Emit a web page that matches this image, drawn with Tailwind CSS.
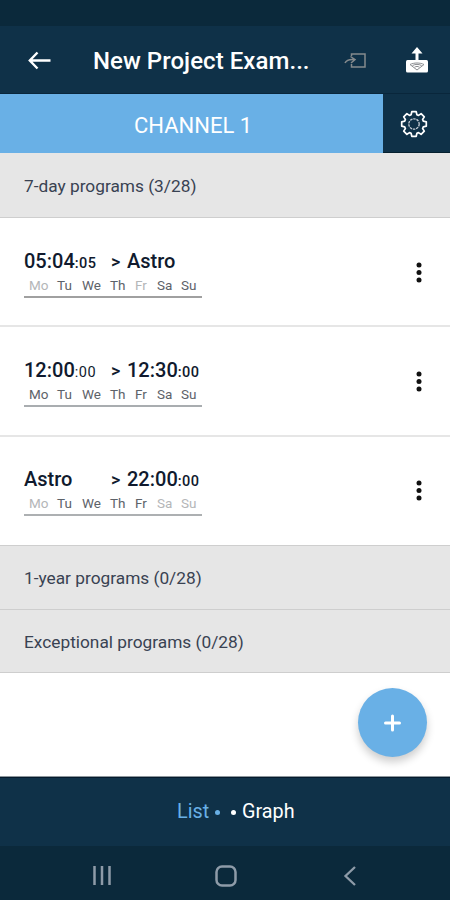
<!DOCTYPE html>
<html lang="en">

<head>
    <meta charset="UTF-8">
    <meta name="viewport" content="width=device-width, initial-scale=1.0">
    <title>Channel Programs</title>
    <script src="https://cdn.jsdelivr.net/npm/@tailwindcss/browser@4"></script>
</head>

<body class="bg-white">
    <div class="w-[450px] h-[900px] flex flex-col overflow-hidden whitespace-nowrap bg-white text-[#101a2e] font-['Roboto',sans-serif]">
        <!-- Status bar -->
        <div class="h-[26px] shrink-0 bg-[#0b293b]"></div>

        <!-- Header -->
        <header class="h-[68px] shrink-0 bg-[#0f3148] text-white flex items-center border-b border-[#09263b]">
            <svg class="ml-7 w-6 h-[22px] shrink-0" viewBox="0 0 24 22" fill="none" stroke="currentColor" stroke-width="2.4">
                <path d="M22.500 11.500H2M9.500 3.500L1.800 11.500l7.700 8" />
            </svg>
            <h1 class="ml-[41px] w-[222px] text-[24px] leading-8 font-medium tracking-[0.05px] pt-[3px]">New Project Exam...</h1>
            <svg class="ml-[29px] w-6 h-5 shrink-0" viewBox="0 0 24 20" fill="none" stroke="#858a8d" stroke-width="1.5">
                <path d="M7.500 6V4H21v13H7.500v-3M1 13c1.500-3 4-4 9-3.500M6.500 6.500l4.500 3-4 3.500" />
            </svg>
            <svg class="ml-[37px] w-6 h-[26px] shrink-0" viewBox="0 0 24 26">
                <path d="M12 0l5.500 6.500H13.500v7h-3V6.500H6.500z" fill="white" />
                <rect x="1" y="13" width="22" height="12.500" rx="1.500" fill="white" />
                <path d="M5 17.500c4-2 10-2 14 0l-7 5.500zM7.500 18.500c3-1.500 6-1.500 9 0M9.500 20.200c2-1 3-1 5 0" fill="none" stroke="#8b8d91" stroke-width="1" />
            </svg>
        </header>

        <!-- Channel tab -->
        <div class="h-[59px] shrink-0 flex bg-[#0f3148]">
            <div class="w-[383px] bg-[#69b0e6] text-white text-[22px] pl-[3px] pt-[3px] flex items-center justify-center">CHANNEL 1</div>
            <div class="flex-1 flex items-center justify-center border-b border-[#06202f]">
                <svg class="w-7 h-7 mr-[5px] mt-0.5" viewBox="-14 -14 28 28" fill="none" stroke="white" stroke-width="1.700" stroke-linejoin="round">
                    <path d="M-2.900-9.300L-2.200-12.300H2.200L2.900-9.300L4.500-8.600L7.100-10.300L10.300-7.100L8.600-4.500L9.300-2.900L12.300-2.200V2.200L9.300 2.900L8.600 4.500L10.300 7.100L7.100 10.300L4.500 8.600L2.900 9.300L2.200 12.300H-2.200L-2.900 9.300L-4.500 8.600L-7.100 10.300L-10.300 7.100L-8.600 4.500L-9.300 2.900L-12.300 2.200V-2.200L-9.300-2.900L-8.600-4.500L-10.300-7.100L-7.100-10.300L-4.500-8.600Z" />
                    <circle r="5.200" stroke-width="1.300" stroke="#c5ccd4" stroke-dasharray="2.500 .8" />
                </svg>
            </div>
        </div>

        <!-- Programs -->
        <main class="h-[624px] shrink-0 relative border-b border-[#8d979d]">
            <h2 class="h-[65px] bg-[#e6e6e6] border-b border-[#cecece] pl-6 pt-1 flex items-center text-[17.3px] text-[#394252]">7-day programs (3/28)</h2>

            <div class="h-[109px] border-b-2 border-[#e6e6e6] pl-6 pr-6 pt-[30px] flex justify-between">
                <div class="w-[178px]">
                    <div class="flex items-baseline h-[28px] text-[20px] leading-[26px] font-medium">
                        <span class="w-[87px]">05:04<span class="text-[14.5px] tracking-[0.5px]">:05</span></span>
                        <span class="w-4 text-[18px]">&gt;</span>
                        <span>Astro</span>
                    </div>
                    <div class="h-[22px] border-b-2 border-[#a0a0a0] pl-[5px] flex text-[13.500px] leading-[19px] text-[#5d6269]">
                        <span class="w-7 text-[#b4b6b8]">Mo</span><span class="w-[25px]">Tu</span><span class="w-7">We</span><span class="w-[25px]">Th</span><span class="w-[22px] text-[#b4b6b8]">Fr</span><span class="w-6">Sa</span><span>Su</span>
                    </div>
                </div>
                <svg class="w-3.5 h-6 mt-3" viewBox="0 0 14 24" fill="#111">
                    <circle cx="7" cy="5" r="2.500" /><circle cx="7" cy="12.500" r="2.500" /><circle cx="7" cy="20" r="2.500" />
                </svg>
            </div>

            <div class="h-[110px] border-b-2 border-[#e6e6e6] pl-6 pr-6 pt-[30px] flex justify-between">
                <div class="w-[178px]">
                    <div class="flex items-baseline h-[28px] text-[20px] leading-[26px] font-medium">
                        <span class="w-[87px]">12:00<span class="text-[14.5px] tracking-[0.5px] font-normal">:00</span></span>
                        <span class="w-4 text-[18px]">&gt;</span>
                        <span>12:30<span class="text-[14.5px] tracking-[0.5px]">:00</span></span>
                    </div>
                    <div class="h-[22px] border-b-2 border-[#a9adb0] pl-[5px] flex text-[13.500px] leading-[19px] text-[#5d6269]">
                        <span class="w-7">Mo</span><span class="w-[25px]">Tu</span><span class="w-7">We</span><span class="w-[25px]">Th</span><span class="w-[22px]">Fr</span><span class="w-6">Sa</span><span>Su</span>
                    </div>
                </div>
                <svg class="w-3.5 h-6 mt-3" viewBox="0 0 14 24" fill="#111">
                    <circle cx="7" cy="5" r="2.500" /><circle cx="7" cy="12.500" r="2.500" /><circle cx="7" cy="20" r="2.500" />
                </svg>
            </div>

            <div class="h-[108px] pl-6 pr-6 pt-[29px] flex justify-between">
                <div class="w-[178px]">
                    <div class="flex items-baseline h-[28px] text-[20px] leading-[26px] font-medium">
                        <span class="w-[87px]">Astro</span>
                        <span class="w-4 text-[18px]">&gt;</span>
                        <span>22:00<span class="text-[14.5px] tracking-[0.5px]">:00</span></span>
                    </div>
                    <div class="h-[22px] border-b-2 border-[#adb0b2] pl-[5px] flex text-[13.500px] leading-[19px] text-[#5d6269]">
                        <span class="w-7 text-[#b4b6b8]">Mo</span><span class="w-[25px]">Tu</span><span class="w-7">We</span><span class="w-[25px]">Th</span><span class="w-[22px]">Fr</span><span class="w-6 text-[#b4b6b8]">Sa</span><span class="text-[#b4b6b8]">Su</span>
                    </div>
                </div>
                <svg class="w-3.5 h-6 mt-3" viewBox="0 0 14 24" fill="#111">
                    <circle cx="7" cy="5" r="2.500" /><circle cx="7" cy="12.500" r="2.500" /><circle cx="7" cy="20" r="2.500" />
                </svg>
            </div>

            <h2 class="h-[65px] bg-[#e6e6e6] border-y border-[#cecece] pl-6 pt-[3px] flex items-center text-[17.3px] text-[#394252]">1-year programs (0/28)</h2>
            <h2 class="h-[63px] bg-[#e6e6e6] border-b border-[#cecece] pl-6 pt-[3px] flex items-center text-[17.3px] text-[#394252]">Exceptional programs (0/28)</h2>

            <!-- Add button -->
            <button class="absolute right-[23px] bottom-[19px] w-[69px] h-[69px] rounded-full bg-[#69b0e6] shadow-[0_5px_9px_rgba(0,0,0,0.2)] flex items-center justify-center">
                <svg class="w-[18px] h-[18px]" viewBox="0 0 18 18" stroke="white" stroke-width="3" stroke-linecap="round">
                    <path d="M8.500 2v14M1.500 9h14" />
                </svg>
            </button>
        </main>

        <!-- View switch -->
        <nav class="h-[69px] shrink-0 bg-[#0f3148] border-t border-[#051a2d] pl-[177px] flex items-center text-[19.8px]">
            <span class="w-[38px] text-[#69b0e6]">List</span>
            <span class="w-[5px] h-[5px] rounded-full bg-[#69b0e6] mr-[11px]"></span>
            <span class="w-[5px] h-[5px] rounded-full bg-white mr-1.5"></span>
            <span class="text-white">Graph</span>
        </nav>

        <!-- System buttons -->
        <div class="h-[54px] shrink-0 bg-[#0b293b] pl-[92px] pt-[5px] flex items-center text-[#8e9ba8]">
            <svg class="w-5 h-5" viewBox="0 0 20 20" stroke="currentColor" stroke-width="2.500">
                <path d="M2.500 0v19M10 0v19M17.500 0v19" />
            </svg>
            <svg class="ml-[103px] w-[22px] h-[22px]" viewBox="0 0 22 22" fill="none" stroke="currentColor" stroke-width="2.500">
                <rect x="1.500" y="1.500" width="19" height="19" rx="5.500" />
            </svg>
            <svg class="ml-[106px] w-3.5 h-5" viewBox="0 0 14 20" fill="none" stroke="currentColor" stroke-width="2.300">
                <path d="M12 1L2.500 10l9.500 9" />
            </svg>
        </div>
    </div>
</body>

</html>
